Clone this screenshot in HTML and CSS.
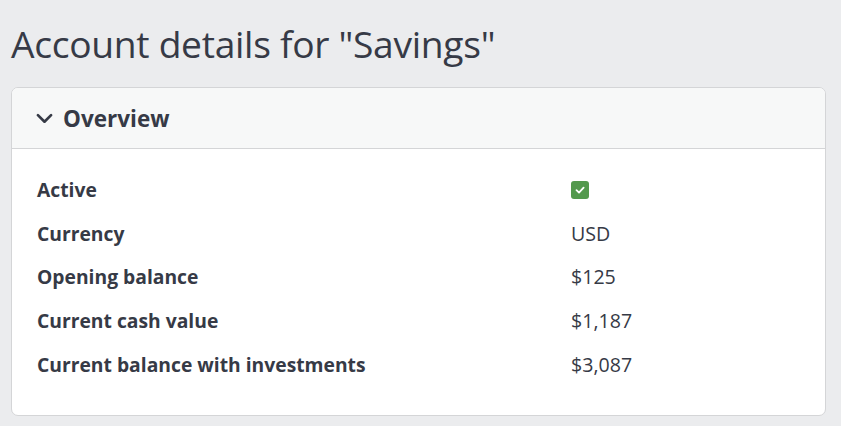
FILE: index.html
```html
<!DOCTYPE html>
<html lang="en">
<head>
    <meta charset="UTF-8">
    <meta name="viewport" content="width=device-width, initial-scale=1.0">
    <title>Account details</title>
    <link rel="stylesheet" href="styles.css">
</head>
<body>
    <h1 class="page-title">Account details for "Savings"</h1>

    <div class="card">
        <div class="card-header">
            <svg class="chevron" width="17" height="17" viewBox="0 0 16 16">
                <path d="M1.8 4.8 L8 11 L14.2 4.8" fill="none" stroke="currentColor" stroke-width="2.5" stroke-linecap="round" stroke-linejoin="round"/>
            </svg>
            <span>Overview</span>
        </div>
        <div class="card-body">
            <div class="detail-label">Active</div>
            <div class="detail-value">
                <span class="check-box">
                    <svg width="12" height="12" viewBox="0 0 12 12">
                        <path d="M2.5 6.2 L5 8.6 L9.6 3.6" fill="none" stroke="white" stroke-width="1.8" stroke-linecap="round" stroke-linejoin="round"/>
                    </svg>
                </span>
            </div>

            <div class="detail-label">Currency</div>
            <div class="detail-value">USD</div>

            <div class="detail-label">Opening balance</div>
            <div class="detail-value">$125</div>

            <div class="detail-label">Current cash value</div>
            <div class="detail-value">$1,187</div>

            <div class="detail-label">Current balance with investments</div>
            <div class="detail-value">$3,087</div>
        </div>
    </div>
</body>
</html>
```

FILE: styles.css
```css
body {
    margin: 0;
    padding: 0 15px 0 11px;
    background-color: #ebecee;
    color: #363a46;
    font-family: "Open Sans", "Noto Sans", sans-serif;
}
.page-title {
    margin: 0;
    padding-top: 18px;
    height: 87px;
    box-sizing: border-box;
    font-size: 37.2px;
    font-weight: 400;
    line-height: 52px;
    letter-spacing: -0.3px;
}
.card {
    background-color: #fff;
    border: 1px solid #d4d5d7;
    border-radius: 7px;
    overflow: hidden;
}
.card-header {
    display: flex;
    align-items: center;
    gap: 10px;
    height: 60px;
    padding-left: 24px;
    background-color: #f7f8f8;
    border-bottom: 1px solid #d4d5d7;
    font-size: 22.5px;
    font-weight: 700;
}
.chevron {
    color: #363a46;
}
.card-body {
    display: grid;
    grid-template-columns: 534px 1fr;
    grid-auto-rows: 43.6px;
    align-items: center;
    padding: 19px 25px 29px;
    font-size: 19.3px;
}
.detail-label {
    font-weight: 700;
}
.detail-value {
    display: flex;
    align-items: center;
    font-size: 19.6px;
}
.check-box {
    display: inline-flex;
    align-items: center;
    justify-content: center;
    width: 18px;
    height: 18px;
    border-radius: 3px;
    background-color: #53994d;
}
```
